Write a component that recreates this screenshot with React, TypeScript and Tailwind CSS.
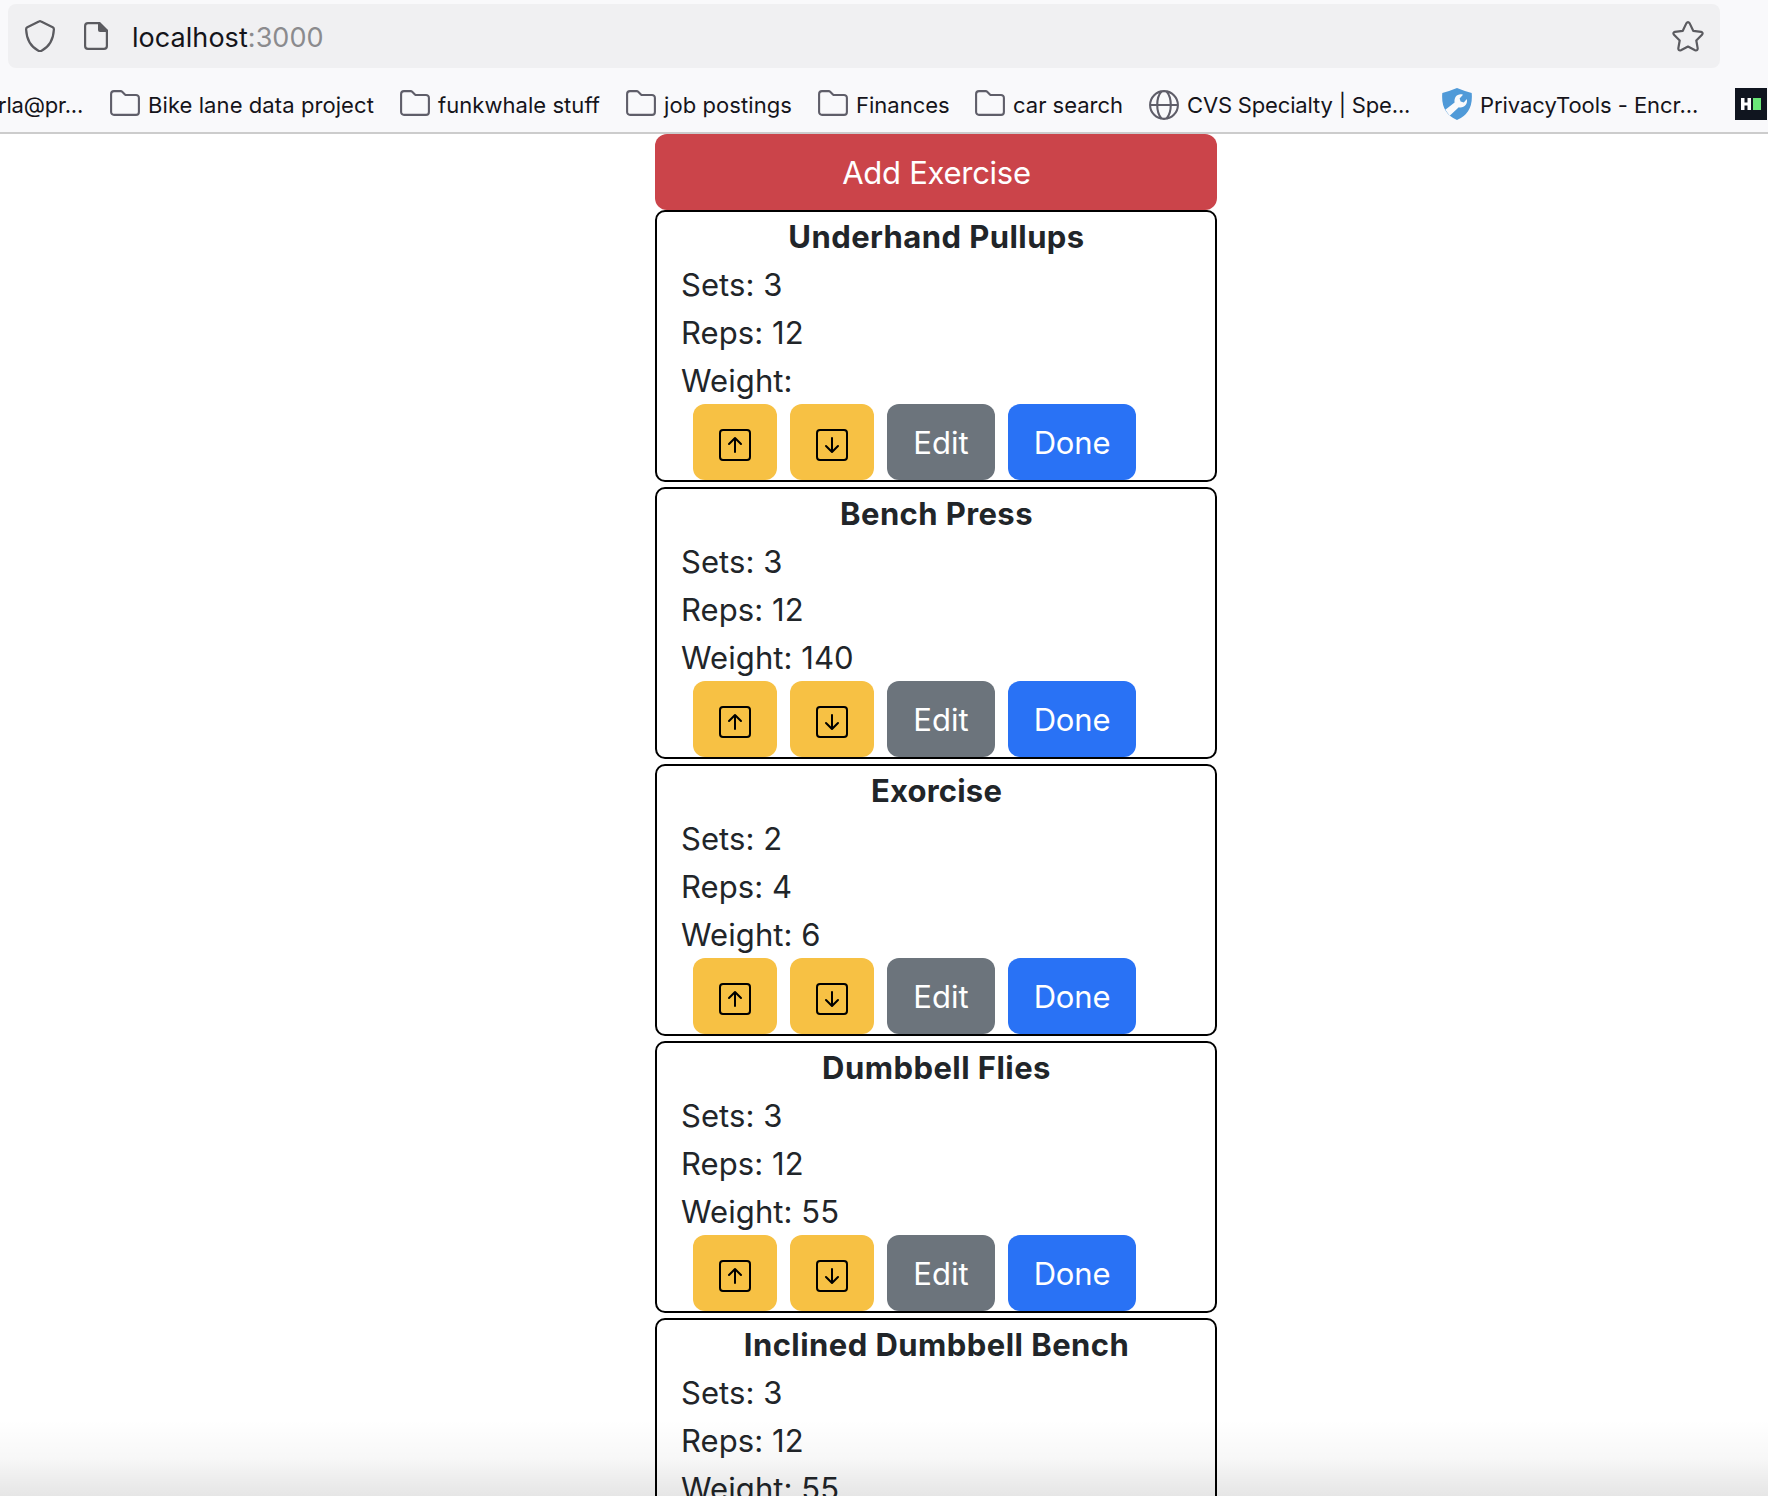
import type { ReactNode } from "react";

type Exercise = { name: string; sets: string; reps: string; weight: string; track: string };

const exercises: Exercise[] = [
  { name: "Underhand Pullups", sets: "3", reps: "12", weight: "", track: "tracking-[0.43px]" },
  { name: "Bench Press", sets: "3", reps: "12", weight: "140", track: "tracking-[0.41px]" },
  { name: "Exorcise", sets: "2", reps: "4", weight: "6", track: "tracking-[0.2px]" },
  { name: "Dumbbell Flies", sets: "3", reps: "12", weight: "55", track: "tracking-[0.45px]" },
  { name: "Inclined Dumbbell Bench", sets: "3", reps: "12", weight: "55", track: "tracking-[0.45px]" },
];

function ShieldIcon() {
  return (
    <svg className="h-8 w-[30px] shrink-0" viewBox="0 0 30 32" fill="none" stroke="#5b5b60" strokeWidth="2.2" strokeLinejoin="round">
      <path d="M13.9 1.5q1.1-.6 2.2 0l11.600 5.800q1.300.7 1.200 2.100C28.400 20 23.500 27.300 16.200 30.900q-1.200.6-2.400 0C6.500 27.300 1.600 20 1.100 9.400q-.1-1.400 1.200-2.100z" />
    </svg>
  );
}

function PageIcon() {
  return (
    <svg className="h-7 w-6 shrink-0" viewBox="0 0 24 28" fill="none">
      <path d="M4 1.100h11.500L22.900 8.500V24a2.900 2.900 0 0 1-2.900 2.900H4A2.900 2.900 0 0 1 1.100 24V4A2.900 2.900 0 0 1 4 1.100z" stroke="#5b5b60" strokeWidth="2.200" />
      <path d="M14 .5h2L23.500 8v2H16a2 2 0 0 1-2-2z" fill="#5b5b60" />
    </svg>
  );
}

function StarIcon() {
  return (
    <svg className="h-[31px] w-8 shrink-0" viewBox="0 0 32 31" fill="none" stroke="#5b5b60" strokeWidth="2.200" strokeLinejoin="round">
      <path d="M14.300 2.400q1.700-2.400 3.400 0l3.500 7.400 7.900 1.100q2.500.8.900 2.900l-5.700 5.700 1.400 7.900q-.1 2.700-2.600 1.900L16 25.500l-7.100 3.800q-2.500.8-2.600-1.900l1.400-7.900L2 13.800q-1.600-2.100.9-2.900l7.900-1.100z" />
    </svg>
  );
}

function FolderIcon() {
  return (
    <svg className="mb-[2px] h-[26px] w-[30px] shrink-0" viewBox="0 0 30 26" fill="none" stroke="#5f5e69" strokeWidth="2.100" strokeLinejoin="round">
      <path d="M1.100 4A2.900 2.900 0 0 1 4 1.100h6.700q.9 0 1.500.6l2.700 2.700q.6.600 1.500.600H26a2.900 2.900 0 0 1 2.900 2.900V22a2.900 2.900 0 0 1-2.900 2.900H4A2.900 2.900 0 0 1 1.100 22z" />
    </svg>
  );
}

function GlobeIcon() {
  return (
    <svg className="mt-[2px] h-[30px] w-[30px] shrink-0" viewBox="0 0 30 30" fill="none" stroke="#5f5e69" strokeWidth="2.100">
      <circle cx="15" cy="15" r="13.900" />
      <path d="M1 15h28M12.500 1.300C6.800 8 6.800 22 12.500 28.700M17.500 1.300C23.200 8 23.200 22 17.500 28.700" />
    </svg>
  );
}

function PrivacyIcon() {
  return (
    <svg className="h-8 w-[30px] shrink-0" viewBox="0 0 30 32">
      <path d="M15 0Q22 3 29.700 4.900 31.500 25 15 32-1.500 25 .3 4.900 8 3 15 0z" fill="#509ad8" />
      <path d="M3.300 21.800 12.600 14.500C11.800 9 16 5 21 6.800L17.600 10.600l1 3 3.200.8 3-3.300c1.300 5.300-3 9.300-8 8.200L7.700 27.700z" fill="#fafafc" />
    </svg>
  );
}

function HackIcon() {
  return (
    <svg className="h-8 w-8 shrink-0" viewBox="0 0 32 32">
      <path d="M0 0h32v32H0z" fill="#10151f" />
      <path d="M6 10h3.500v4.500h3V10H16v12h-3.500v-4.500h-3V22H6z" fill="#fff" />
      <path d="M18 10h8v12h-8z" fill="#6ae777" />
    </svg>
  );
}

function ArrowSquare({ down = false }: { down?: boolean }) {
  return (
    <svg className="mt-[6px] h-8 w-8" viewBox="0 0 16 16" fill="#000">
      <path
        fillRule="evenodd"
        d={
          down
            ? "M15 2a1 1 0 0 0-1-1H2a1 1 0 0 0-1 1v12a1 1 0 0 0 1 1h12a1 1 0 0 0 1-1zM0 2a2 2 0 0 1 2-2h12a2 2 0 0 1 2 2v12a2 2 0 0 1-2 2H2a2 2 0 0 1-2-2zm8.500 2.500a.5.5 0 0 0-1 0v5.793L5.354 8.146a.5.5 0 1 0-.708.708l3 3a.5.5 0 0 0 .708 0l3-3a.5.5 0 0 0-.708-.708L8.500 10.293z"
            : "M15 2a1 1 0 0 0-1-1H2a1 1 0 0 0-1 1v12a1 1 0 0 0 1 1h12a1 1 0 0 0 1-1zM0 2a2 2 0 0 1 2-2h12a2 2 0 0 1 2 2v12a2 2 0 0 1-2 2H2a2 2 0 0 1-2-2zm8.500 9.500a.5.5 0 0 1-1 0V5.707L5.354 7.854a.5.5 0 1 1-.708-.708l3-3a.5.5 0 0 1 .708 0l3 3a.5.5 0 0 1-.708.708L8.500 5.707z"
        }
      />
    </svg>
  );
}

function Bookmark({ icon, label, width }: { icon: ReactNode; label: string; width: string }) {
  return (
    <div className={`flex shrink-0 items-center gap-2 ${width}`}>
      {icon}
      <span className="pt-[3px] whitespace-nowrap">{label}</span>
    </div>
  );
}

function ExerciseCard({ name, sets, reps, weight, track }: Exercise) {
  return (
    <section className="h-[272px] shrink-0 rounded-[10px] border-2 border-black px-6">
      <div className="h-48 pt-px tracking-[0.08px]">
        <h2 className={`pl-px text-center font-bold ${track}`}>{name}</h2>
        <p>Sets: {sets}</p>
        <p>Reps: {reps}</p>
        <p>Weight: {weight}</p>
      </div>
      <div className="ml-3 flex h-[76px] gap-[13px] text-white">
        <button className="flex w-[84px] items-center justify-center rounded-xl bg-[#f7c144]"><ArrowSquare /></button>
        <button className="flex w-[84px] items-center justify-center rounded-xl bg-[#f7c144]"><ArrowSquare down /></button>
        <button className="w-[108px] rounded-xl bg-[#6c747c] pt-[2px]">Edit</button>
        <button className="w-32 rounded-xl bg-[#2972f5] pt-[2px] tracking-[-0.15px]">Done</button>
      </div>
    </section>
  );
}

export default function App() {
  return (
    <div className="relative flex h-[1496px] w-[1768px] flex-col overflow-hidden bg-white font-['Inter',sans-serif]">
      <header className="h-[134px] shrink-0 border-b-2 border-[#cccccc] bg-[#f9f9fb] pt-1 text-[#15141a]">
        <div className="ml-2 flex h-16 w-[1712px] items-center rounded-lg bg-[#f0f0f2] pr-4 pl-[17px]">
          <ShieldIcon />
          <span className="ml-[29px]"><PageIcon /></span>
          <span className="ml-6 pt-[5px] text-[27px] tracking-[0.05px]">localhost<span className="text-[#8b8b8e]">:3000</span></span>
          <span className="ml-auto"><StarIcon /></span>
        </div>
        <nav className="flex h-16 items-center pt-2 text-[22px]">
          <span className="w-[110px] shrink-0 pt-[3px] tracking-[-0.2px]"><span className="-ml-[2px]">rla@pr...</span></span>
          <Bookmark icon={<FolderIcon />} label="Bike lane data project" width="w-[290px] tracking-[0.08px]" />
          <Bookmark icon={<FolderIcon />} label="funkwhale stuff" width="w-[226px] tracking-[0.05px]" />
          <Bookmark icon={<FolderIcon />} label="job postings" width="w-[192px] tracking-[0.08px]" />
          <Bookmark icon={<FolderIcon />} label="Finances" width="w-[157px]" />
          <Bookmark icon={<FolderIcon />} label="car search" width="w-[174px]" />
          <Bookmark icon={<GlobeIcon />} label="CVS Specialty | Spe..." width="w-[293px] tracking-[-0.17px]" />
          <Bookmark icon={<PrivacyIcon />} label="PrivacyTools - Encr..." width="w-[293px] tracking-[-0.05px]" />
          <HackIcon />
        </nav>
      </header>
      <main className="ml-[655px] flex w-[562px] flex-col text-[31px] leading-[48px] text-[#212529]">
        <button className="h-[76px] shrink-0 rounded-xl bg-[#cb444a] pt-[2px] pl-px tracking-[-0.28px] text-white">Add Exercise</button>
        <div className="flex flex-col gap-[5px]">
          {exercises.map((e) => <ExerciseCard key={e.name} {...e} />)}
        </div>
      </main>
      <div className="pointer-events-none absolute inset-x-0 bottom-0 h-[76px] bg-linear-to-b from-transparent via-black/3 to-black/10" />
    </div>
  );
}
